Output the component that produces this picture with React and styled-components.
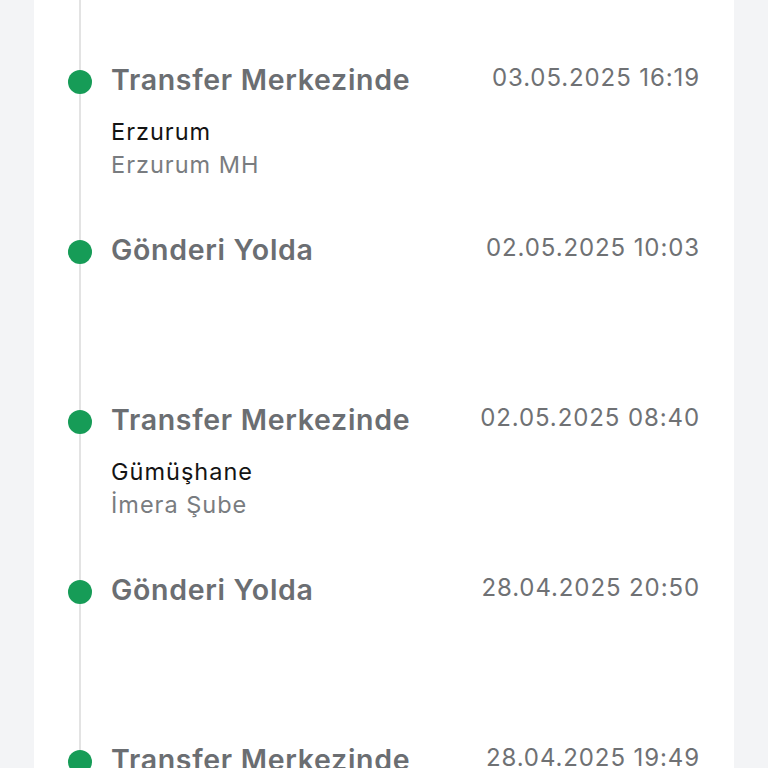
import React from 'react';
import styled, { createGlobalStyle } from 'styled-components';

const events = [
  { status: 'Transfer Merkezinde', date: '03.05.2025 16:19', city: 'Erzurum', branch: 'Erzurum MH' },
  { status: 'Gönderi Yolda', date: '02.05.2025 10:03' },
  { status: 'Transfer Merkezinde', date: '02.05.2025 08:40', city: 'Gümüşhane', branch: 'İmera Şube' },
  { status: 'Gönderi Yolda', date: '28.04.2025 20:50' },
  { status: 'Transfer Merkezinde', date: '28.04.2025 19:49' },
];

const GlobalStyle = createGlobalStyle`
  html, body {
    margin: 0;
    background: #f3f4f6;
    font-family: Inter, 'Noto Sans', sans-serif;
    -webkit-font-smoothing: antialiased;
  }
`;

const Page = styled.div`
  height: 768px;
  padding: 0 34px;
  overflow: hidden;
`;

const Card = styled.div`
  position: relative;
  height: 768px;
  background: #fff;
  padding: 63px 34px 0 34px;
  box-sizing: border-box;

  /* timeline rail behind the dots */
  &::before {
    content: '';
    position: absolute;
    top: 0;
    bottom: 0;
    left: 45px;
    width: 2px;
    background: #e3e3e3;
  }
`;

const Item = styled.div`
  position: relative;
  height: 170px;
  display: grid;
  grid-template-columns: 24px 1fr auto;
  grid-template-rows: auto 1fr;
  column-gap: 19px;
  align-items: start;
`;

const Dot = styled.span`
  width: 24px;
  height: 24px;
  margin-top: 7px;
  border-radius: 50%;
  background: #169c57;
`;

const Status = styled.div`
  font-size: 28.5px;
  line-height: 34px;
  font-weight: 600;
  color: #6b6e72;
  letter-spacing: 0.7px;
`;

const Stamp = styled.div`
  margin-top: 1px;
  font-size: 24px;
  line-height: 28px;
  color: #6f7174;
  letter-spacing: 0.9px;
  white-space: nowrap;
`;

const Place = styled.div`
  grid-column: 2 / 4;
  margin-top: 18px;
`;

const Line = styled.div`
  font-size: 23.5px;
  line-height: 33px;
  letter-spacing: 1px;
  color: ${(p) => (p.$muted ? '#797c80' : '#141414')};
`;

export default function App() {
  return (
    <>
      <GlobalStyle />
      <Page>
        <Card>
          {events.map((e, i) => (
            <Item key={i}>
              <Dot />
              <Status>{e.status}</Status>
              <Stamp>{e.date}</Stamp>
              {e.city && (
                <Place>
                  <Line>{e.city}</Line>
                  <Line $muted>{e.branch}</Line>
                </Place>
              )}
            </Item>
          ))}
        </Card>
      </Page>
    </>
  );
}
